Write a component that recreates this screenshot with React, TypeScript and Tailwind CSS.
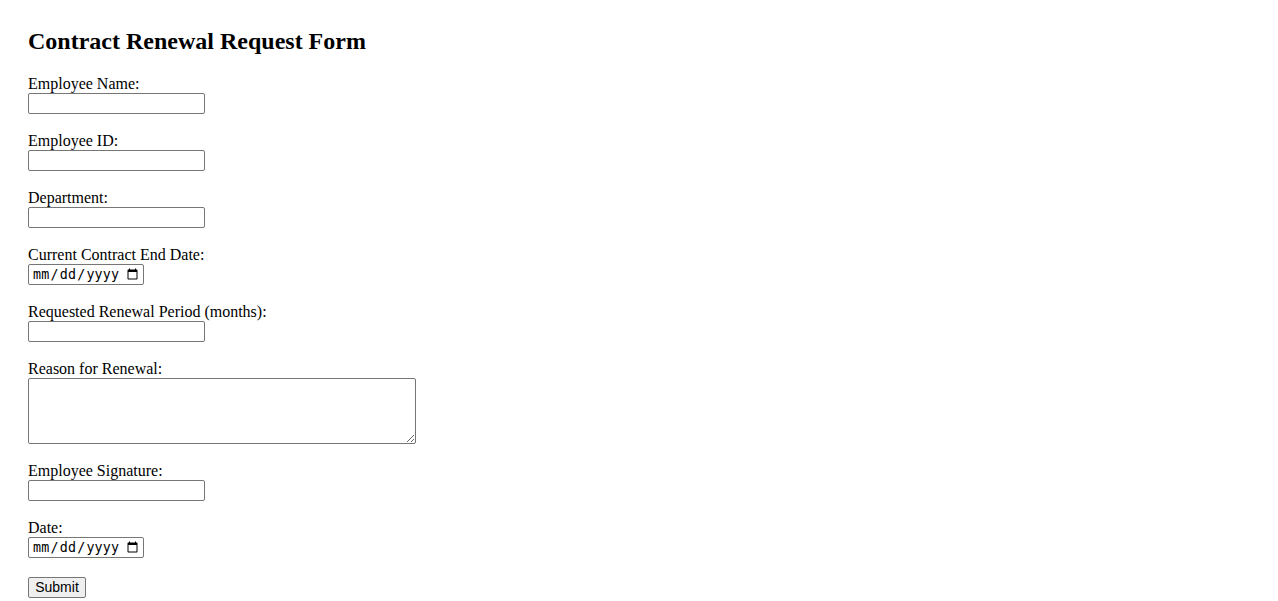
const fields: { label: string; type: "text" | "date" | "textarea" }[] = [
  { label: "Employee Name:", type: "text" },
  { label: "Employee ID:", type: "text" },
  { label: "Department:", type: "text" },
  { label: "Current Contract End Date:", type: "date" },
  { label: "Requested Renewal Period (months):", type: "text" },
  { label: "Reason for Renewal:", type: "textarea" },
  { label: "Employee Signature:", type: "text" },
  { label: "Date:", type: "date" },
];

const box =
  "block border border-[#767676] rounded-[2px] bg-white text-black outline-none";

export default function App() {
  return (
    <div className="min-h-screen bg-white px-[28px] pt-[27px] text-black font-['Liberation_Serif','Times_New_Roman',serif]">
      <h2 className="mb-[20px] text-[24px] font-bold leading-[28px]">
        Contract Renewal Request Form
      </h2>

      <form onSubmit={(e) => e.preventDefault()} className="flex flex-col items-start">
        {fields.map((f) => (
          <div key={f.label} className="mb-[18px]">
            <label className="block text-[16px] leading-[18px]">{f.label}</label>
            {f.type === "text" && (
              <input
                type="text"
                className={`${box} h-[21px] w-[177px] px-[2px] py-[1px] text-[13.33px] font-['Liberation_Sans',Arial,sans-serif]`}
              />
            )}
            {f.type === "date" && (
              <input
                type="date"
                className={`${box} h-[21px] w-[116px] pl-[3px] pr-[2px] py-[1px] text-[13.33px] tracking-[0.2px] font-['DejaVu_Sans_Mono',monospace]`}
              />
            )}
            {f.type === "textarea" && (
              <textarea
                className={`${box} h-[66px] w-[388px] p-[2px] text-[13.33px] font-['DejaVu_Sans_Mono',monospace]`}
              />
            )}
          </div>
        ))}

        <button
          type="submit"
          className="mt-[1px] h-[21px] w-[58px] rounded-[2px] border border-[#767676] bg-[#efefef] text-[14px] leading-[15px] text-black font-['Liberation_Sans',Arial,sans-serif]"
        >
          Submit
        </button>
      </form>
    </div>
  );
}
